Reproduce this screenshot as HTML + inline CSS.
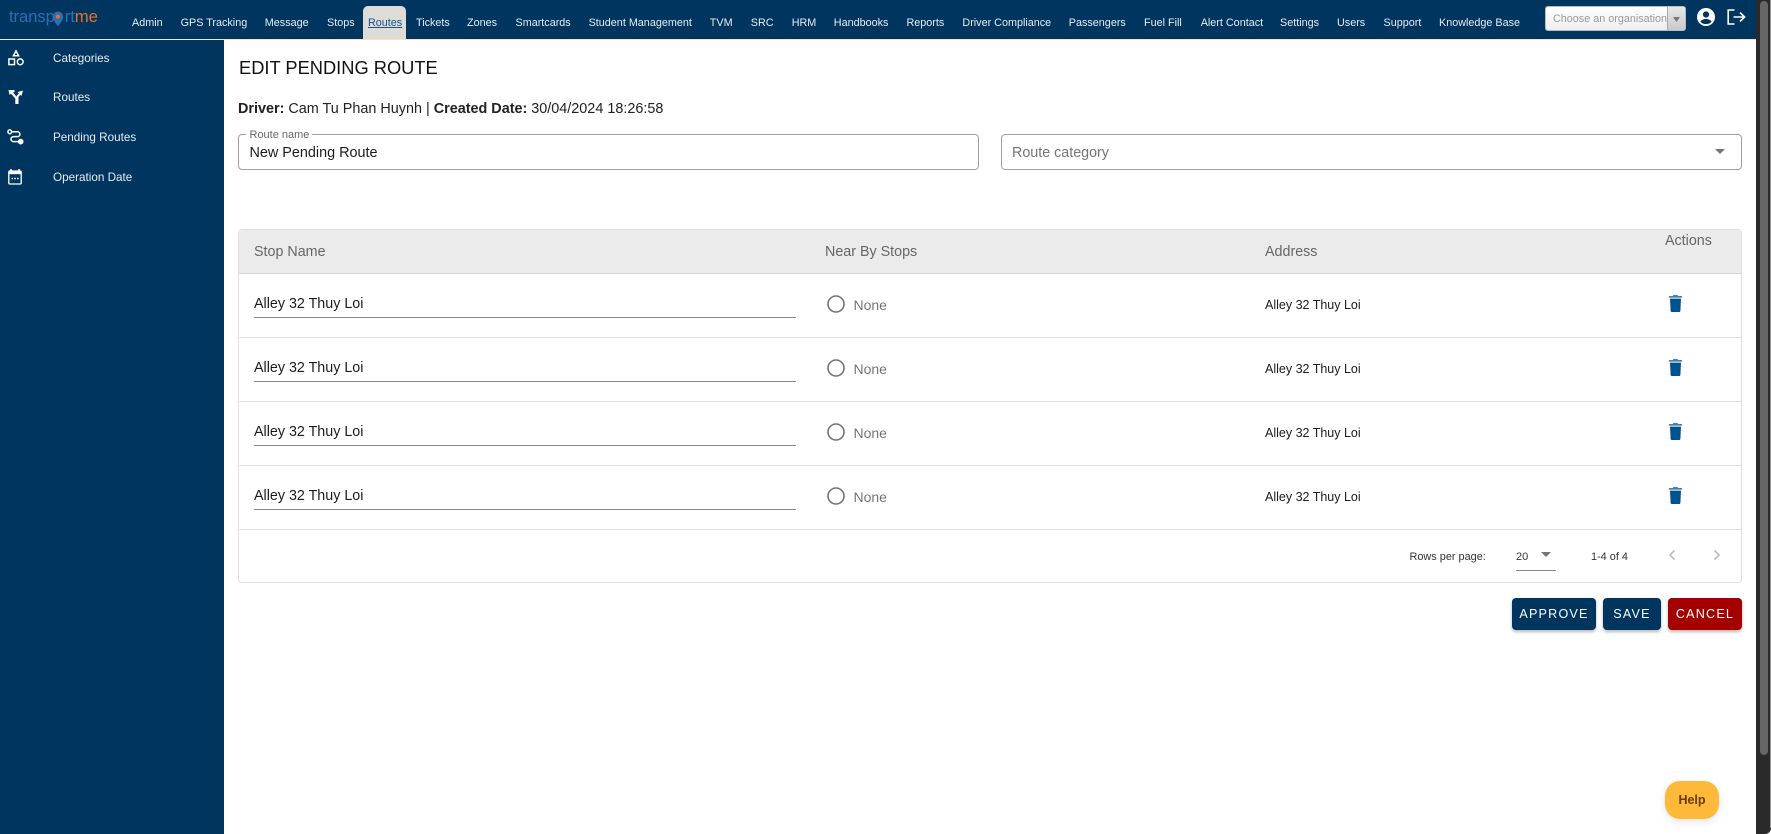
<!DOCTYPE html>
<html>
<head>
<meta charset="utf-8">
<title>Edit Pending Route</title>
<style>
html,body{margin:0;padding:0;width:1771px;height:834px;overflow:hidden;background:#fff;font-family:"Liberation Sans",sans-serif;}
.a{position:absolute;white-space:nowrap;}
.t{position:absolute;white-space:nowrap;line-height:16px;}
#nav{position:absolute;left:0;top:0;width:1771px;height:39px;background:#00355f;border-bottom:1px solid #f3e9b0;}
.n{position:absolute;top:15px;font-size:10.8px;line-height:16px;color:#e6ecf1;white-space:nowrap;}
#side{position:absolute;left:0;top:40px;width:224px;height:794px;background:#00355f;}
.s{position:absolute;left:53px;font-size:11.7px;line-height:16px;color:#e6ecf1;white-space:nowrap;}
.box{position:absolute;box-sizing:border-box;border:1px solid #a0a0a0;border-radius:4px;background:#fff;}
.th{position:absolute;font-size:14.3px;line-height:16px;color:#666;white-space:nowrap;}
.sep{position:absolute;left:238px;width:1503px;height:1px;background:#e0e0e0;}
.stop{position:absolute;left:254px;font-size:14.3px;line-height:16px;color:#1c1c1c;white-space:nowrap;}
.ul{position:absolute;left:254px;width:542px;height:1px;background:#8a8a8a;}
.none{position:absolute;left:853.5px;font-size:14px;line-height:16px;color:#757575;white-space:nowrap;}
.addr{position:absolute;left:1265px;font-size:12.5px;line-height:16px;color:#1c1c1c;white-space:nowrap;}
.btn{position:absolute;top:598px;height:32px;line-height:32px;border-radius:4px;color:#fff;font-size:12.6px;letter-spacing:1.2px;text-align:center;background:#00355f;box-shadow:0 2px 3px rgba(0,0,0,.28);}
svg{position:absolute;display:block;overflow:visible;}
</style>
</head>
<body>
<div id="nav"></div>

<!-- logo -->
<div class="a" style="left:9px;top:7px;font-size:16.7px;line-height:20px;color:#2a70b2;letter-spacing:-.1px;">transp<span style="display:inline-block;width:10px;"></span><span>rt</span><span style="color:#e8702a;">me</span></div>
<svg style="left:52px;top:11px" width="12" height="16" viewBox="0 0 12 16"><path d="M6 0.5A5.2 5.2 0 0 0 .8 5.7C.8 9 4.4 12.8 6 15.5 7.6 12.8 11.2 9 11.2 5.7A5.2 5.2 0 0 0 6 .5Z" fill="#2a70b2"/><circle cx="6" cy="5.6" r="2" fill="#e8702a"/></svg>

<!-- active tab -->
<div class="a" style="left:363px;top:6px;width:43px;height:33px;background:#dddcd8;border-radius:5px 5px 0 0;"></div>

<div class="n" style="left:132px">Admin</div>
<div class="n" style="left:180.6px">GPS Tracking</div>
<div class="n" style="left:264.8px">Message</div>
<div class="n" style="left:327px">Stops</div>
<div class="n" style="left:368px;color:#1a5288;text-decoration:underline">Routes</div>
<div class="n" style="left:416px">Tickets</div>
<div class="n" style="left:467px">Zones</div>
<div class="n" style="left:515.5px">Smartcards</div>
<div class="n" style="left:588.6px">Student Management</div>
<div class="n" style="left:709.8px">TVM</div>
<div class="n" style="left:750.8px">SRC</div>
<div class="n" style="left:791.7px">HRM</div>
<div class="n" style="left:833.8px">Handbooks</div>
<div class="n" style="left:906.5px">Reports</div>
<div class="n" style="left:962.4px">Driver Compliance</div>
<div class="n" style="left:1068.8px">Passengers</div>
<div class="n" style="left:1144px">Fuel Fill</div>
<div class="n" style="left:1200.7px">Alert Contact</div>
<div class="n" style="left:1280px">Settings</div>
<div class="n" style="left:1337px">Users</div>
<div class="n" style="left:1383.5px">Support</div>
<div class="n" style="left:1439px">Knowledge Base</div>

<!-- org select -->
<div class="a" style="left:1545px;top:6px;width:141px;height:25px;box-sizing:border-box;border:1px solid #bbb;border-radius:3px;background:linear-gradient(#fff,#eee);"></div>
<div class="t" style="left:1553px;top:11px;font-size:10.8px;color:#9a9a9a;">Choose an organisation</div>
<div class="a" style="left:1667px;top:7px;width:18px;height:23px;background:linear-gradient(#e8e8e8,#c9c9c9);border-left:1px solid #aaa;border-radius:0 2px 2px 0;box-sizing:border-box;"></div>
<svg style="left:1673px;top:17px" width="7" height="5" viewBox="0 0 7 5"><path d="M0 0H7L3.5 5Z" fill="#777"/></svg>

<!-- user icon -->
<svg style="left:1696.5px;top:8px" width="18" height="18" viewBox="0 0 18 18"><path fill-rule="evenodd" fill="#fff" d="M9 0A9 9 0 1 1 9 18 9 9 0 0 1 9 0ZM9 3.4A3.1 3.1 0 1 0 9 9.6 3.1 3.1 0 0 0 9 3.4ZM9 11C6.5 11 4.4 12 3.4 13.6 4.7 15.2 6.7 16.1 9 16.1 11.3 16.1 13.3 15.2 14.6 13.6 13.6 12 11.5 11 9 11Z"/></svg>
<!-- logout icon -->
<svg style="left:1727px;top:9px" width="19" height="16" viewBox="0 0 19 16"><path d="M7.5 1H1.2V15H7.5M6.5 8H17.5M13 3.6 17.6 8 13 12.4" fill="none" stroke="#fff" stroke-width="1.6"/></svg>

<!-- sidebar -->
<div id="side"></div>
<svg style="left:8px;top:50px" width="16" height="16" viewBox="0 0 16 16" fill="none" stroke="#fff" stroke-width="1.5"><path d="M8 1 10.6 5.8H5.4Z"/><rect x=".9" y="9" width="5.6" height="5.6"/><circle cx="12.2" cy="11.8" r="2.9"/></svg>
<svg style="left:8px;top:89px" width="16" height="16" viewBox="0 0 16 16" fill="#fff"><path d="M0 1H6V3.2L4.4 3.2 8 7.6 8 7 10.4 4.5 9 3.1 14.5 1.5 13 7 11.8 5.7 10 8V15H6.8V9.6L2.4 4.6 1 6Z" transform="translate(.5 0)"/></svg>
<svg style="left:7px;top:129px" width="17" height="17" viewBox="0 0 17 17" fill="none" stroke="#fff" stroke-width="1.5"><circle cx="2.8" cy="2.8" r="1.9"/><path d="M4.8 2.8H10.5A2.4 2.4 0 0 1 10.5 7.6H6.5A2.4 2.4 0 0 0 6.5 12.6H11.5"/><circle cx="13.7" cy="12.6" r="2.1" fill="#fff"/></svg>
<svg style="left:8px;top:169px" width="14" height="16" viewBox="0 0 14 16"><path d="M3 0V2M11 0V2" stroke="#fff" stroke-width="1.5"/><rect x=".8" y="2" width="12.4" height="13" rx="1" fill="none" stroke="#fff" stroke-width="1.3"/><rect x=".8" y="2" width="12.4" height="3.2" fill="#fff"/><path d="M3.5 9.5H5M6.3 9.5H7.8M9.1 9.5H10.6" stroke="#fff" stroke-width="1.4"/></svg>
<div class="s" style="top:51px">Categories</div>
<div class="s" style="top:90px">Routes</div>
<div class="s" style="top:130px">Pending Routes</div>
<div class="s" style="top:170px">Operation Date</div>

<!-- title -->
<div class="a" style="left:239px;top:57px;font-size:18.3px;line-height:22px;color:#111;">EDIT PENDING ROUTE</div>
<div class="a" style="left:238px;top:101px;font-size:14.4px;line-height:16px;color:#222;"><b>Driver:</b> Cam Tu Phan Huynh | <b>Created Date:</b> 30/04/2024 18:26:58</div>

<!-- inputs -->
<div class="box" style="left:238px;top:134px;width:741px;height:36px;"></div>
<div class="a" style="left:246px;top:132px;height:4px;width:66px;background:#fff;"></div>
<div class="t" style="left:249.5px;top:127px;font-size:11px;color:#666;">Route name</div>
<div class="t" style="left:249.5px;top:145px;font-size:14.4px;color:#1c1c1c;">New Pending Route</div>
<div class="box" style="left:1001px;top:134px;width:741px;height:36px;"></div>
<div class="t" style="left:1012px;top:145px;font-size:14.3px;color:#757575;">Route category</div>
<svg style="left:1715px;top:149px" width="10" height="5" viewBox="0 0 10 5"><path d="M0 0H10L5 5Z" fill="#757575"/></svg>

<!-- table -->
<div class="a" style="left:238px;top:229px;width:1503.5px;height:354px;box-sizing:border-box;border:1px solid #e0e0e0;border-radius:4px;"></div>
<div class="a" style="left:238.5px;top:229.5px;width:1502.5px;height:43.5px;background:#ebebeb;border-bottom:1px solid #d5d5d5;border-radius:4px 4px 0 0;"></div>
<div class="th" style="left:254px;top:244px">Stop Name</div>
<div class="th" style="left:825px;top:244px">Near By Stops</div>
<div class="th" style="left:1265px;top:244px">Address</div>
<div class="th" style="left:1665px;top:233px">Actions</div>

<div class="sep" style="top:337px"></div>
<div class="sep" style="top:401px"></div>
<div class="sep" style="top:465px"></div>
<div class="sep" style="top:529px"></div>

<!-- rows -->
<div class="stop" style="top:296px">Alley 32 Thuy Loi</div><div class="ul" style="top:317px"></div>
<svg style="left:827px;top:295px" width="18" height="18"><circle cx="9" cy="9" r="8" fill="none" stroke="#757575" stroke-width="1.6"/></svg>
<div class="none" style="top:296.5px">None</div><div class="addr" style="top:297px">Alley 32 Thuy Loi</div>
<svg style="left:1669px;top:295px" width="13" height="17" viewBox="0 0 13 17"><path d="M4.5 0H8.5L9 1H13V2.6H0V1H4Z" fill="#3d7cab"/><path d="M1 3.6H12L11.4 15.6A1.4 1.4 0 0 1 10 17H3A1.4 1.4 0 0 1 1.6 15.6Z" fill="#00528f"/></svg>

<div class="stop" style="top:360px">Alley 32 Thuy Loi</div><div class="ul" style="top:381px"></div>
<svg style="left:827px;top:359px" width="18" height="18"><circle cx="9" cy="9" r="8" fill="none" stroke="#757575" stroke-width="1.6"/></svg>
<div class="none" style="top:360.5px">None</div><div class="addr" style="top:361px">Alley 32 Thuy Loi</div>
<svg style="left:1669px;top:359px" width="13" height="17" viewBox="0 0 13 17"><path d="M4.5 0H8.5L9 1H13V2.6H0V1H4Z" fill="#3d7cab"/><path d="M1 3.6H12L11.4 15.6A1.4 1.4 0 0 1 10 17H3A1.4 1.4 0 0 1 1.6 15.6Z" fill="#00528f"/></svg>

<div class="stop" style="top:424px">Alley 32 Thuy Loi</div><div class="ul" style="top:445px"></div>
<svg style="left:827px;top:423px" width="18" height="18"><circle cx="9" cy="9" r="8" fill="none" stroke="#757575" stroke-width="1.6"/></svg>
<div class="none" style="top:424.5px">None</div><div class="addr" style="top:425px">Alley 32 Thuy Loi</div>
<svg style="left:1669px;top:423px" width="13" height="17" viewBox="0 0 13 17"><path d="M4.5 0H8.5L9 1H13V2.6H0V1H4Z" fill="#3d7cab"/><path d="M1 3.6H12L11.4 15.6A1.4 1.4 0 0 1 10 17H3A1.4 1.4 0 0 1 1.6 15.6Z" fill="#00528f"/></svg>

<div class="stop" style="top:488px">Alley 32 Thuy Loi</div><div class="ul" style="top:509px"></div>
<svg style="left:827px;top:487px" width="18" height="18"><circle cx="9" cy="9" r="8" fill="none" stroke="#757575" stroke-width="1.6"/></svg>
<div class="none" style="top:488.5px">None</div><div class="addr" style="top:489px">Alley 32 Thuy Loi</div>
<svg style="left:1669px;top:487px" width="13" height="17" viewBox="0 0 13 17"><path d="M4.5 0H8.5L9 1H13V2.6H0V1H4Z" fill="#3d7cab"/><path d="M1 3.6H12L11.4 15.6A1.4 1.4 0 0 1 10 17H3A1.4 1.4 0 0 1 1.6 15.6Z" fill="#00528f"/></svg>

<!-- pagination -->
<div class="t" style="left:1409.5px;top:549px;font-size:10.9px;color:#333;">Rows per page:</div>
<div class="t" style="left:1516px;top:549px;font-size:11px;color:#333;">20</div>
<svg style="left:1541px;top:551.5px" width="10" height="5" viewBox="0 0 10 5"><path d="M0 0H10L5 5Z" fill="#757575"/></svg>
<div class="a" style="left:1516px;top:570px;width:40px;height:1px;background:#8a8a8a;"></div>
<div class="t" style="left:1591px;top:549px;font-size:10.9px;color:#333;">1-4 of 4</div>
<svg style="left:1669px;top:550px" width="6" height="10" viewBox="0 0 6 10"><path d="M5.5 .5 1 5 5.5 9.5" fill="none" stroke="#bdbdbd" stroke-width="1.6"/></svg>
<svg style="left:1714px;top:550px" width="6" height="10" viewBox="0 0 6 10"><path d="M.5 .5 5 5 .5 9.5" fill="none" stroke="#bdbdbd" stroke-width="1.6"/></svg>

<!-- buttons -->
<div class="btn" style="left:1512px;width:84px;">APPROVE</div>
<div class="btn" style="left:1603px;width:58px;">SAVE</div>
<div class="btn" style="left:1668px;width:74px;background:#a50000;">CANCEL</div>

<!-- help -->
<div class="a" style="left:1665px;top:781px;width:54px;height:38px;border-radius:15px;background:#ffb93a;box-shadow:0 3px 8px rgba(0,0,0,.1);text-align:center;line-height:38px;font-size:12.5px;font-weight:bold;color:#6b3a00;">Help</div>

<!-- scrollbar -->
<div class="a" style="left:1756px;top:0;width:15px;height:834px;background:#2a2a2a;border-radius:0 0 6px 0;"></div>
<div class="a" style="left:1770px;top:0;width:1px;height:828px;background:#9a9a9a;"></div>
<div class="a" style="left:1759.5px;top:1px;width:8.5px;height:754px;background:#666;border-radius:4px;"></div>
</body>
</html>
